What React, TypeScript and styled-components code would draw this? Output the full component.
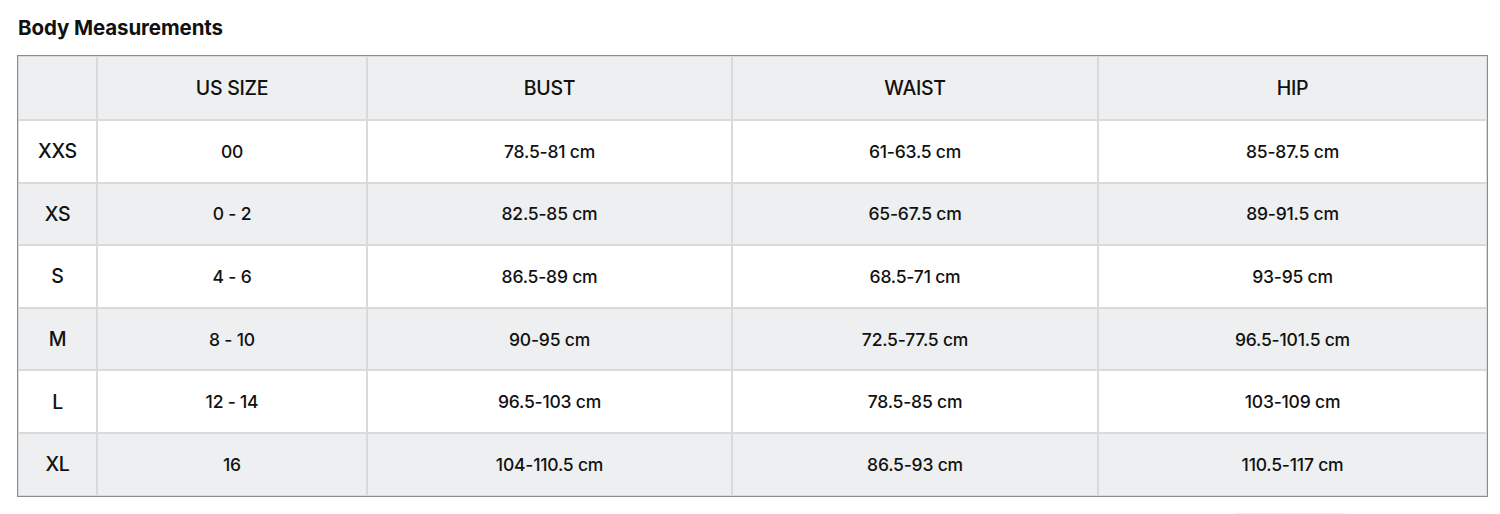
import React from 'react';
import styled, { createGlobalStyle } from 'styled-components';

const GlobalStyle = createGlobalStyle`
  html, body {
    margin: 0;
    padding: 0;
    background: #ffffff;
  }
  body {
    font-family: Inter, "Liberation Sans", Arial, sans-serif;
    color: #111111;
    overflow: hidden;
  }
`;

const columns = ['', 'US SIZE', 'BUST', 'WAIST', 'HIP'];

const rows = [
  ['XXS', '00', '78.5-81 cm', '61-63.5 cm', '85-87.5 cm'],
  ['XS', '0 - 2', '82.5-85 cm', '65-67.5 cm', '89-91.5 cm'],
  ['S', '4 - 6', '86.5-89 cm', '68.5-71 cm', '93-95 cm'],
  ['M', '8 - 10', '90-95 cm', '72.5-77.5 cm', '96.5-101.5 cm'],
  ['L', '12 - 14', '96.5-103 cm', '78.5-85 cm', '103-109 cm'],
  ['XL', '16', '104-110.5 cm', '86.5-93 cm', '110.5-117 cm'],
];

const Page = styled.div`
  width: 1500px;
  height: 514px;
  padding: 16px 0 0 17px;
  box-sizing: border-box;
`;

const Title = styled.h2`
  margin: 0 0 15px 1px;
  font-size: 20.5px;
  line-height: 24px;
  font-weight: 700;
  letter-spacing: -0.1px;
  color: #111111;
`;

const Table = styled.div`
  display: grid;
  width: 1471px;
  box-sizing: border-box;
  grid-template-columns: 77px 268px 363px 364px 387px;
  grid-template-rows: 62px repeat(6, 60.6px);
  gap: 2px;
  padding: 1px;
  border: 1px solid #8d8d8d;
  background: #dadada;
`;

const Cell = styled.div<{ $shaded: boolean; $head?: boolean; $label?: boolean }>`
  display: flex;
  align-items: center;
  justify-content: center;
  background: ${p => (p.$shaded ? '#eeeff0' : '#ffffff')};
  font-size: ${p => (p.$head || p.$label ? '19.5px' : '17.5px')};
  font-weight: ${p => (p.$head || p.$label ? 450 : 500)};
  letter-spacing: ${p => (p.$head || p.$label ? '-0.3px' : '-0.2px')};
  color: #111111;
`;

const Footer = styled.div`
  display: flex;
  padding: 16px 0 0 1218px;
`;

const FooterTab = styled.div`
  width: 110px;
  height: 20px;
  border-top: 2px solid #f1f1f1;
`;

const App = () => {
  return (
    <Page>
      <GlobalStyle />
      <Title>Body Measurements</Title>
      <Table>
        {columns.map((c, i) => (
          <Cell key={'h' + i} $shaded $head>
            {c}
          </Cell>
        ))}
        {rows.map((row, r) =>
          row.map((v, i) => (
            <Cell key={r + '-' + i} $shaded={r % 2 === 1} $label={i === 0}>
              {v}
            </Cell>
          ))
        )}
      </Table>
      <Footer>
        <FooterTab />
      </Footer>
    </Page>
  );
};

export default App;
